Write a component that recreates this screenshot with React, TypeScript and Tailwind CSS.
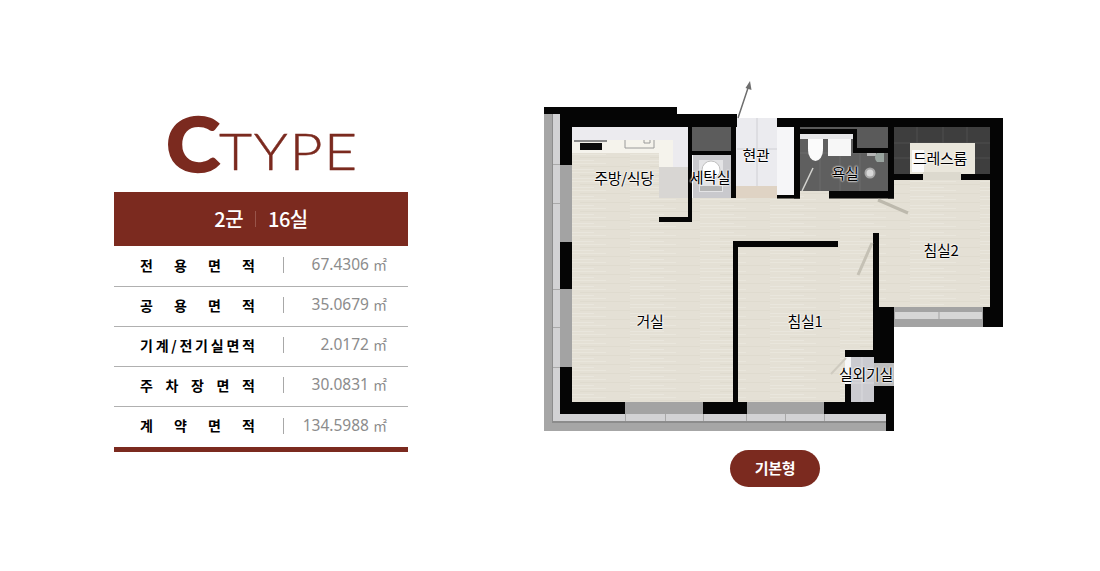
const rows = [
  { chars: ["전", "용", "면", "적"], value: "67.4306" },
  { chars: ["공", "용", "면", "적"], value: "35.0679" },
  { chars: ["기", "계", "/", "전", "기", "실", "면", "적"], value: "2.0172" },
  { chars: ["주", "차", "장", "면", "적"], value: "30.0831" },
  { chars: ["계", "약", "면", "적"], value: "134.5988" },
];

const rooms = [
  { label: "주방/식당", x: 84, y: 97 },
  { label: "세탁실", x: 170, y: 96 },
  { label: "현관", x: 216, y: 74 },
  { label: "욕실", x: 305, y: 92 },
  { label: "드레스룸", x: 400, y: 77 },
  { label: "침실2", x: 401, y: 169 },
  { label: "거실", x: 110, y: 240 },
  { label: "침실1", x: 265, y: 240 },
  { label: "실외기실", x: 326, y: 293 },
];

function FloorPlan() {
  const wall = "#050505";
  return (
    <svg width="470" height="360" viewBox="540 80 470 360" className="block">
      <defs>
        <pattern id="floor" width="70" height="9" patternUnits="userSpaceOnUse">
          <rect width="70" height="9" fill="#e4e0d5" />
          <rect y="1" width="46" height="1" fill="#e9e6dc" />
          <rect x="20" y="4" width="50" height="1" fill="#dfdbcf" />
          <rect y="7" width="34" height="1" fill="#e9e6dd" />
        </pattern>
      </defs>

      {/* balcony, left and bottom */}
      <rect x="544" y="114" width="9" height="317" fill="#a6a6a6" />
      <rect x="553" y="114" width="7" height="307" fill="#d2d2d4" />
      <rect x="552" y="114" width="1" height="308" fill="#8c8c8c" />
      <rect x="544" y="423" width="342" height="8" fill="#a6a6a6" />
      <rect x="553" y="414" width="333" height="7" fill="#d2d2d4" />
      <rect x="552" y="421" width="334" height="2" fill="#8c8c8c" />
      <path d="M553 164v1h7v-1zM553 203v1h7v-1zM553 289v1h7v-1zM553 327v1h7v-1zM553 367v1h7v-1z" fill="#a9a9a9" />
      <path d="M625 414h1v7h-1zM665 414h1v7h-1zM703 414h1v7h-1zM746 414h1v7h-1zM785 414h1v7h-1zM824 414h1v7h-1z" fill="#a9a9a9" />

      {/* floors */}
      <rect x="572" y="127" width="116" height="91" fill="#ecebef" />
      <rect x="659" y="167" width="29" height="51" fill="#d8d6d3" />
      <rect x="572" y="140" width="101" height="27" fill="#f5f3ec" />
      <rect x="572" y="153" width="87" height="66" fill="url(#floor)" />
      <rect x="572" y="198" width="162" height="204" fill="url(#floor)" />
      <rect x="692" y="198" width="300" height="44" fill="url(#floor)" />
      <rect x="800" y="191" width="29" height="8" fill="url(#floor)" />
      <rect x="738" y="240" width="136" height="162" fill="url(#floor)" />
      <rect x="878" y="172" width="112" height="135" fill="url(#floor)" />

      {/* kitchen fittings */}
      <rect x="574" y="140" width="33" height="2" fill="#8a8a8a" />
      <rect x="580" y="143" width="22" height="7" fill="#0a0a0a" />
      <path d="M625 140v8h29v-8M644 140v3h6v-3" fill="none" stroke="#9a9a9a" strokeWidth="1" />

      {/* laundry */}
      <rect x="692" y="127" width="39" height="24" fill="#5c5c5c" />
      <rect x="693" y="155" width="38" height="43" fill="#c9c9cd" />
      <rect x="699" y="160" width="24" height="32" fill="#e4e4e6" />
      <circle cx="711" cy="170" r="9" fill="#fff" stroke="#c0c0c0" />
      <rect x="700" y="186" width="22" height="5" fill="#b5b5b5" />

      {/* entrance */}
      <rect x="736" y="118" width="41" height="80" fill="#ebebef" />
      <rect x="777" y="127" width="17" height="68" fill="#f6f6f8" />
      <path d="M757 118v68M737 149h40" stroke="#cfcfd4" strokeWidth="1" />
      <rect x="736" y="186" width="41" height="12" fill="#dfd3c4" />

      {/* bath */}
      <rect x="800" y="134" width="88" height="57" fill="#5f5f5f" />
      <path d="M800 153h88M820 134v57M840 134v57M860 134v57" stroke="#6c6c6c" strokeWidth="1" />
      <rect x="800" y="134" width="53" height="5" fill="#e6e6e8" />
      <ellipse cx="815.500" cy="150" rx="7.500" ry="11" fill="#fbfbfb" />
      <rect x="808" y="139" width="15" height="10" fill="#fbfbfb" />
      <rect x="828" y="139" width="23" height="17" fill="#f7f7f7" />
      <circle cx="870" cy="173" r="4.500" fill="#d8d8d8" stroke="#a8a8a8" strokeWidth="2" />
      <rect x="867" y="153" width="9" height="3" fill="#b5b5b5" />
      <path d="M884 153v9h-7a6 6 0 0 1 0-9z" fill="#9aa5a0" />
      <path d="M802 191L813 168" stroke="#d4d4d0" strokeWidth="1.500" />

      {/* closet */}
      <rect x="800" y="127" width="88" height="2" fill="#5a5a5a" />
      <rect x="857" y="127" width="31" height="21" fill="#5a5a5a" />
      <rect x="894" y="127" width="96" height="47" fill="#3e3e3e" />
      <path d="M917 127v16M943 127v16M967 127v16M894 143h96M894 158h16M975 158h15" stroke="#4f4f4f" strokeWidth="1" />
      <rect x="910" y="143" width="65" height="37" fill="#e9e6db" />
      <rect x="912" y="150" width="12" height="22" fill="#fbfbfb" />
      <rect x="923" y="172" width="38" height="8" fill="#dcd9ce" />

      {/* walls */}
      <g fill={wall}>
        <rect x="544" y="107" width="133" height="7" />
        <rect x="560" y="107" width="12" height="58" />
        <rect x="560" y="114" width="177" height="13" />
        <rect x="677" y="118" width="60" height="9" />
        <rect x="777" y="118" width="226" height="9" />
        <rect x="688" y="127" width="4" height="95" />
        <rect x="659" y="217" width="33" height="5" />
        <rect x="692" y="151" width="39" height="4" />
        <rect x="731" y="127" width="5" height="71" />
        <rect x="777" y="195" width="23" height="3.500" />
        <rect x="794" y="127" width="6" height="71.500" />
        <rect x="800" y="129" width="57" height="5" />
        <rect x="853" y="134" width="4" height="19" />
        <rect x="857" y="148" width="31" height="5" />
        <rect x="829" y="191" width="65" height="7.500" />
        <rect x="888" y="127" width="6" height="71.500" />
        <rect x="894" y="174" width="29" height="6" />
        <rect x="961" y="174" width="29" height="6" />
        <rect x="990" y="127" width="13" height="200" />
        <rect x="983" y="307" width="20" height="20" />
        <rect x="733" y="241" width="105" height="6" />
        <rect x="733" y="241" width="5" height="165" />
        <rect x="873" y="233" width="6" height="120" />
        <rect x="874" y="307" width="20" height="56" />
        <rect x="845" y="350" width="30" height="7" />
        <rect x="845" y="384" width="6" height="20" />
        <rect x="874" y="386" width="20" height="28" />
        <rect x="886" y="414" width="8" height="17" />
        <rect x="560" y="242" width="12" height="47" />
        <rect x="560" y="367" width="12" height="47" />
        <rect x="560" y="402" width="65" height="12" />
        <rect x="703" y="402" width="44" height="12" />
        <rect x="824" y="402" width="62" height="12" />
      </g>

      {/* windows */}
      <rect x="560" y="165" width="12" height="77" fill="#a3a3a3" />
      <rect x="560" y="289" width="12" height="78" fill="#a3a3a3" />
      <rect x="625" y="402" width="78" height="12" fill="#a3a3a3" />
      <rect x="747" y="402" width="77" height="12" fill="#a3a3a3" />

      {/* bedroom 2 balcony */}
      <rect x="894" y="307" width="89" height="20" fill="#a3a3a3" />
      <rect x="895" y="312" width="87" height="7" fill="#d6d6d6" />
      <path d="M939 312v7" stroke="#a3a3a3" strokeWidth="1" />

      {/* outdoor unit room */}
      <rect x="851" y="357" width="23" height="45" fill="#cbcbd0" />
      <path d="M851 370h23M851 383h23M862 357v45" stroke="#dadade" strokeWidth="1" />
      <rect x="874" y="363" width="20" height="23" fill="#bdbdbd" />
      <rect x="845" y="357" width="6" height="27" fill="#f7f7f7" />

      {/* doors */}
      <path d="M878 200L908 213" stroke="#bdb9ad" strokeWidth="3" />
      <path d="M872 243L858 275" stroke="#c5c1b5" strokeWidth="3" />
      <path d="M846 358L831 374" stroke="#cfcbc0" strokeWidth="2" />

      {/* entrance arrow */}
      <path d="M738 118L749 85" stroke="#6e6e6e" strokeWidth="1.500" />
      <path d="M750 81L745.500 88L751.500 90z" fill="#6e6e6e" />
    </svg>
  );
}

export default function App() {
  return (
    <div className="flex h-[571px] w-[1100px] overflow-hidden bg-white font-['Noto_Sans_CJK_KR',sans-serif]">
      <section className="ml-[114px] w-[294px] pt-[103px]">
        <h1 className="flex h-[89px] items-start pl-[52px] text-[#7b2a1f]">
          <span className="inline-block w-[53px] origin-left scale-x-[1.08] font-['Lato',sans-serif] text-[76px] leading-[79px] font-black [-webkit-text-stroke:1.500px_#7b2a1f]">
            C
          </span>
          <span className="mt-[22px] inline-block origin-left scale-x-[1.12] font-['Lato',sans-serif] text-[51px] leading-[52px] font-light tracking-[1.500px] [-webkit-text-stroke:0.400px_#7b2a1f]">
            TYPE
          </span>
        </h1>

        <div className="flex h-[54px] items-center justify-center bg-[#7b2a1f] text-[20px] font-medium text-white">
          <span className="tracking-[-0.5px]">2군</span>
          <span className="mx-[12px] h-[16px] w-px bg-[#98544a]" />
          <span className="tracking-[-0.5px]">16실</span>
        </div>

        <div className="border-b-[5px] border-[#7b2a1f] pt-px">
          {rows.map((row, i) => (
            <div
              key={i}
              className={`flex h-[40px] items-center pb-[3px] ${i < rows.length - 1 ? "border-b border-[#b0b0b0]" : ""}`}
            >
              <div className="ml-[26px] flex w-[115px] justify-between text-[14px] font-bold text-black">
                {row.chars.map((c, j) => (
                  <span key={j}>{c}</span>
                ))}
              </div>
              <span className="ml-[28px] h-[16px] w-px bg-[#a8a8a8]" />
              <span className="ml-auto pr-[21px] font-['Noto_Sans','Noto_Sans_CJK_KR',sans-serif] text-[15.500px] font-normal text-[#8c8c8c]">
                {row.value} <span className="text-[14px]">㎡</span>
              </span>
            </div>
          ))}
        </div>
      </section>

      <section className="ml-[132px] flex w-[470px] flex-col items-center pt-[80px]">
        <div className="relative h-[360px] w-[470px]">
          <FloorPlan />
          {rooms.map((room) => (
            <span
              key={room.label}
              className="absolute -translate-x-1/2 -translate-y-1/2 text-[15px] leading-none tracking-[-0.3px] whitespace-nowrap text-black [text-shadow:0_0_2px_#fff,0_0_2px_#fff,0_0_2px_#fff]"
              style={{ left: room.x, top: room.y }}
            >
              {room.label}
            </span>
          ))}
        </div>
        <button className="mt-[10px] h-[37px] w-[90px] rounded-full bg-[#7b2a1f] text-[15px] font-bold tracking-[-0.3px] text-white">
          기본형
        </button>
      </section>
    </div>
  );
}
